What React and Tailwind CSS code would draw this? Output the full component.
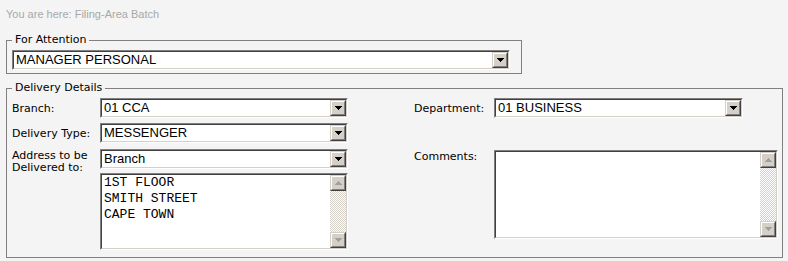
import React from "react";

function DropButton() {
  return (
    <div className="h-full w-[16px] border border-t-[#d4d0c8] border-l-[#d4d0c8] border-b-[#404040] border-r-[#404040]">
      <div className="flex h-full w-full items-center justify-center border border-t-white border-l-white border-b-[#808080] border-r-[#808080] bg-[#d4d0c8]">
        <svg width="7" height="4" viewBox="0 0 7 4" shapeRendering="crispEdges">
          <polygon points="0,0 7,0 3.5,4" fill="#000" />
        </svg>
      </div>
    </div>
  );
}

function ScrollButton({ up }) {
  return (
    <div className="h-[16px] w-[16px] border border-t-[#d4d0c8] border-l-[#d4d0c8] border-b-[#404040] border-r-[#404040]">
      <div className="flex h-full w-full items-center justify-center border border-t-white border-l-white border-b-[#808080] border-r-[#808080] bg-[#d4d0c8]">
        <svg width="7" height="4" viewBox="0 0 7 4" shapeRendering="crispEdges">
          <polygon points={up ? "3.5,0 7,4 0,4" : "0,0 7,0 3.5,4"} fill="#a0a0a0" />
        </svg>
      </div>
    </div>
  );
}

function Select({ value, className }) {
  return (
    <div className={`h-[20px] border border-t-[#808080] border-l-[#808080] border-b-white border-r-white ${className}`}>
      <div className="flex h-full items-center border border-t-[#404040] border-l-[#404040] border-b-[#d4d0c8] border-r-[#d4d0c8] bg-white">
        <span className="flex-1 truncate pl-[2px] font-['Liberation_Sans',Arial,sans-serif] text-[13px] leading-[16px] text-black">
          {value}
        </span>
        <DropButton />
      </div>
    </div>
  );
}

function TextArea({ lines = [], className }) {
  return (
    <div className={`border border-t-[#808080] border-l-[#808080] border-b-white border-r-white ${className}`}>
      <div className="flex h-full border border-t-[#404040] border-l-[#404040] border-b-[#d4d0c8] border-r-[#d4d0c8] bg-white">
        <div className="flex-1 pl-[2px] font-['Liberation_Mono','Courier_New',monospace] text-[13px] leading-[16px] text-black">
          {lines.map((l) => (
            <div key={l}>{l}</div>
          ))}
        </div>
        <div className="flex h-full w-[16px] flex-col">
          <ScrollButton up />
          <div className="flex-1 bg-[image:repeating-conic-gradient(#d4d0c8_0%_25%,#ffffff_0%_50%)] bg-size-[2px_2px]" />
          <ScrollButton />
        </div>
      </div>
    </div>
  );
}

export default function App() {
  return (
    <div className="h-[261px] w-[788px] overflow-hidden bg-[#f4f4f4] font-['DejaVu_Sans',Verdana,sans-serif] text-[11px] text-black">
      <div className="pl-[6px] pt-[8px] font-['Liberation_Sans',Arial,sans-serif] text-[11px] leading-[13px] text-[#a8a8a8]">
        You are here: Filing-Area Batch
      </div>

      <fieldset className="ml-[6px] mt-[12px] w-[516px] border border-[#808080] pb-[3px] pl-[5px]">
        <legend className="px-[3px] leading-[14px]">For Attention</legend>
        <Select value="MANAGER PERSONAL" className="mt-[3px] w-[498px]" />
      </fieldset>

      <fieldset className="ml-[6px] mt-[7px] w-[777px] border border-[#808080] pb-[7px] pl-[5px]">
        <legend className="px-[3px] leading-[14px]">Delivery Details</legend>
        <div className="mt-[3px] flex">
          <div className="flex flex-col">
            <div className="flex items-center">
              <div className="w-[88px] leading-[13px]">Branch:</div>
              <Select value="01 CCA" className="w-[248px]" />
            </div>
            <div className="mt-[5px] flex items-center">
              <div className="w-[88px] leading-[13px]">Delivery Type:</div>
              <Select value="MESSENGER" className="w-[248px]" />
            </div>
            <div className="mt-[6px] flex">
              <div className="w-[88px] pt-[1px] leading-[12px]">
                Address to be
                <br />
                Delivered to:
              </div>
              <div className="flex flex-col">
                <Select value="Branch" className="w-[248px]" />
                <TextArea
                  lines={["1ST FLOOR", "SMITH STREET", "CAPE TOWN"]}
                  className="mt-[4px] h-[77px] w-[248px]"
                />
              </div>
            </div>
          </div>

          <div className="ml-[66px] flex flex-col">
            <div className="flex items-center">
              <div className="w-[80px] leading-[13px]">Department:</div>
              <Select value="01 BUSINESS" className="w-[249px]" />
            </div>
            <div className="mt-[32px] flex">
              <div className="w-[80px] leading-[13px]">Comments:</div>
              <TextArea className="h-[89px] w-[284px]" />
            </div>
          </div>
        </div>
      </fieldset>
    </div>
  );
}
